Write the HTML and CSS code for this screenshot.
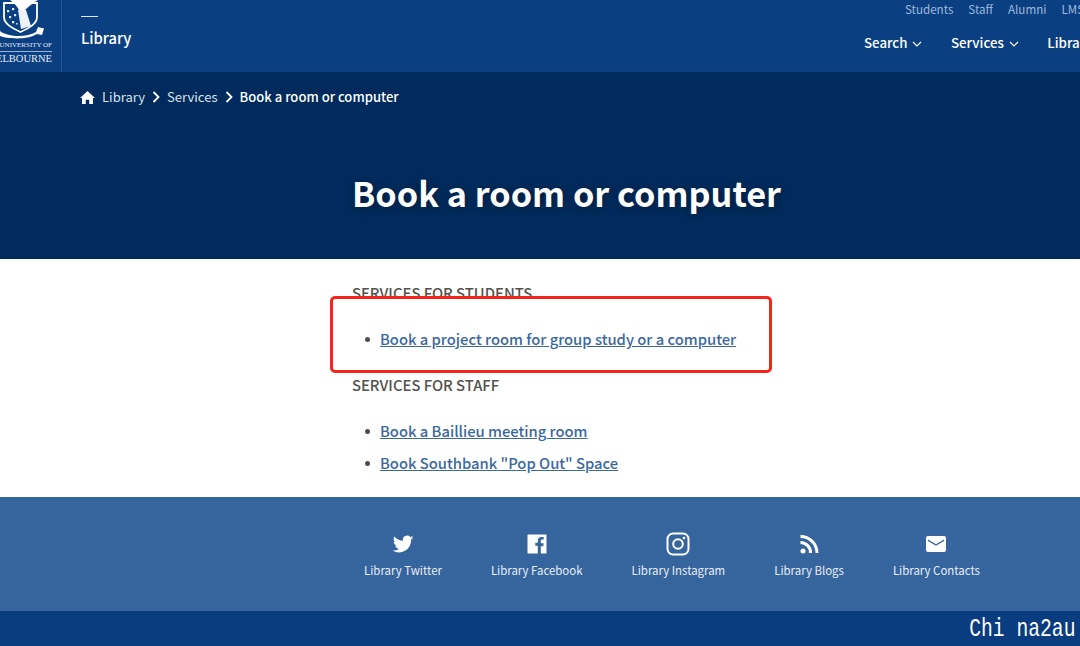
FILE: index.html
```html
<!DOCTYPE html>
<html lang="en">
<head>
<meta charset="utf-8">
<title>Book a room or computer</title>
<link rel="stylesheet" href="styles.css">
</head>
<body>
<header class="top">
  <div class="logo">
    <svg class="crest" width="46" height="40" viewBox="0 0 46 40">
      <path d="M4 3 H37 V17 C37 24 29 28 20.500 32 C12 28 4 24 4 17 Z" fill="none" stroke="#fff" stroke-width="1.800"/>
      <path d="M10 0 H38 C33 3 29 6 25 10 H19 C17 6 14 3 10 0 Z" fill="#fff"/>
      <path d="M18 10 H26 L31 26 L21 29 Z" fill="#eef2f8"/>
      <path d="M7 10h2.200v2.200H7zM12 8h2.200v2.200H12zM9 16h2.200v2.200H9zM14 14h2.200v2.200H14zM12 21h2.200v2.200H12zM16 23h1.500v1.500H16z" fill="#dfe7f2"/>
      <path d="M0 31 C8 37 26 38 36 32 L38 27 L44 28.500 L42 35 L37 34 C28 40 8 39 0 36 Z" fill="#fff"/>
    </svg>
    <div class="logo-line one">UNIVERSITY OF</div>
    <div class="logo-line two">ELBOURNE</div>
  </div>
  <div class="site">
    <span class="dash"></span>
    <span class="site-name">Library</span>
  </div>
  <nav class="nav">
    <ul class="nav-small">
      <li>Students</li><li>Staff</li><li>Alumni</li><li>LMS</li>
    </ul>
    <ul class="nav-main">
      <li>Search <svg class="chev" width="10" height="6" viewBox="0 0 10 6"><path d="M1 1l4 4 4-4" fill="none" stroke="#fff" stroke-width="1.200"/></svg></li>
      <li>Services <svg class="chev" width="10" height="6" viewBox="0 0 10 6"><path d="M1 1l4 4 4-4" fill="none" stroke="#fff" stroke-width="1.200"/></svg></li>
      <li>Library</li>
    </ul>
  </nav>
</header>
<section class="hero">
  <div class="crumbs">
    <svg width="15" height="13" viewBox="0 0 15 13"><path d="M7.500 0L15 7H13V13H9.200V8.800H5.800V13H2V7H0z" fill="#fff"/></svg>
    <span class="crumb">Library</span>
    <svg class="sep" width="8" height="12" viewBox="0 0 8 12"><path d="M1.500 1l5 5-5 5" fill="none" stroke="#fff" stroke-width="1.800"/></svg>
    <span class="crumb">Services</span>
    <svg class="sep" width="8" height="12" viewBox="0 0 8 12"><path d="M1.500 1l5 5-5 5" fill="none" stroke="#fff" stroke-width="1.800"/></svg>
    <strong class="crumb-now">Book a room or computer</strong>
  </div>
  <h1>Book a room or computer</h1>
</section>
<main class="content">
  <h2>SERVICES FOR STUDENTS</h2>
  <ul class="links">
    <li><a href="#">Book a project room for group study or a computer</a></li>
  </ul>
  <h2>SERVICES FOR STAFF</h2>
  <ul class="links">
    <li><a href="#">Book a Baillieu meeting room</a></li>
    <li><a href="#">Book Southbank "Pop Out" Space</a></li>
  </ul>
</main>
<section class="social">
  <a class="soc" href="#">
    <svg width="24" height="24" viewBox="0 0 24 24"><path fill="#fff" d="M22.500 5.600c-.8.3-1.600.6-2.400.7.9-.5 1.500-1.300 1.800-2.300-.8.5-1.700.8-2.700 1a4.200 4.200 0 0 0-7.200 3.800C8.500 8.600 5.400 7 3.300 4.400a4.200 4.200 0 0 0 1.300 5.600c-.7 0-1.300-.2-1.900-.5 0 2 1.400 3.800 3.400 4.200-.6.200-1.300.2-1.900.1.500 1.700 2.100 2.900 3.900 2.900A8.500 8.500 0 0 1 1.500 18.500 12 12 0 0 0 20 7.800c.9-.6 1.700-1.300 2.500-2.200z"/></svg>
    <span>Library Twitter</span>
  </a>
  <a class="soc" href="#">
    <svg width="24" height="24" viewBox="0 0 24 24"><path fill="#fff" d="M3 2.500h18a.5.5 0 0 1 .5.5v18a.5.5 0 0 1-.5.5h-5.200v-7.300h2.500l.4-2.900h-2.900V9c0-.8.200-1.400 1.400-1.400h1.500V5c-.3 0-1.200-.1-2.200-.1-2.200 0-3.700 1.300-3.700 3.800v2.100h-2.500v2.900h2.500v7.800H3a.5.5 0 0 1-.5-.5V3a.5.500 0 0 1 .5-.5z"/></svg>
    <span>Library Facebook</span>
  </a>
  <a class="soc" href="#">
    <svg width="24" height="24" viewBox="0 0 24 24"><rect x="1.500" y="1.500" width="21" height="21" rx="5.500" fill="none" stroke="#fff" stroke-width="2"/><circle cx="12" cy="12" r="4.800" fill="none" stroke="#fff" stroke-width="2"/><circle cx="18" cy="6" r="1.300" fill="#fff"/></svg>
    <span>Library Instagram</span>
  </a>
  <a class="soc" href="#">
    <svg width="24" height="24" viewBox="0 0 24 24"><circle cx="6" cy="19" r="2.500" fill="#fff"/><path d="M3.500 10.500a10 10 0 0 1 10 10.500M3.500 4.500a16.500 16.500 0 0 1 16.500 16.500" fill="none" stroke="#fff" stroke-width="3"/></svg>
    <span>Library Blogs</span>
  </a>
  <a class="soc" href="#">
    <svg width="24" height="24" viewBox="0 0 24 24"><path fill="#fff" d="M4 4h16a2 2 0 0 1 2 2v12a2 2 0 0 1-2 2H4a2 2 0 0 1-2-2V6a2 2 0 0 1 2-2zm0 3.500V9l8 4.800L20 9V7.500l-8 4.800z"/></svg>
    <span>Library Contacts</span>
  </a>
</section>
<footer class="bottom"><span class="mark">Chi na2au</span></footer>
<div class="callout"></div>
</body>
</html>
```
FILE: styles.css
```css
* { box-sizing: border-box; }
html, body { margin: 0; height: 646px; overflow: hidden; }
body {
  position: relative;
  width: 1080px;
  font-family: "Noto Sans CJK SC", "Noto Sans", sans-serif;
  background: #fff;
}
ul { margin: 0; padding: 0; }

.top {
  height: 72px;
  background: #0a4082;
  display: flex;
  color: #fff;
  position: relative;
}
.logo {
  width: 62px;
  height: 72px;
  border-right: 1px solid #245592;
  position: relative;
  overflow: hidden;
  flex: none;
}
.crest { position: absolute; left: 0; top: 0; }
.logo-line {
  position: absolute;
  right: 9px;
  font-family: "Liberation Serif", serif;
  color: #e4eaf3;
  white-space: nowrap;
}
.logo-line.one { top: 41px; font-size: 7px; padding-bottom: 2px; border-bottom: 1px solid #9fb4d2; width: 53px; text-align: right; }
.logo-line.two { top: 53px; font-size: 10.500px; }
.site { margin-left: 19px; display: flex; flex-direction: column; padding-top: 16px; }
.dash { width: 17px; height: 1px; background: #dfe7f2; }
.site-name { margin-top: 10px; font-size: 14.800px; line-height: 22px; font-weight: 500; }
.nav {
  position: absolute;
  right: 0;
  top: 0;
  width: 240px;
  height: 72px;
  overflow: hidden;
}
.nav-small {
  list-style: none;
  display: flex;
  gap: 15px;
  position: absolute;
  left: 65px;
  top: 0;
  font-size: 11.600px;
  line-height: 18px;
  color: #9fb8dc;
  white-space: nowrap;
}
.nav-main {
  list-style: none;
  display: flex;
  gap: 28.500px;
  position: absolute;
  left: 24px;
  top: 33px;
  font-size: 13.300px;
  line-height: 20px;
  font-weight: 500;
  white-space: nowrap;
}
.chev { margin-left: 2px; vertical-align: 1px; }

.hero {
  height: 187px;
  background: #012b5c;
  color: #fff;
  padding: 14px 0 0 80px;
}
.crumbs {
  display: flex;
  align-items: center;
  gap: 7px;
  font-size: 13.050px;
  line-height: 22px;
  color: #d9e2ef;
}
.crumb-now { color: #fff; font-weight: 500; }
h1 {
  margin: 61px 0 0 272px;
  font-size: 34.250px;
  line-height: 46px;
  font-weight: 700;
  text-shadow: 0 2px 8px rgba(0, 0, 0, .35);
  white-space: nowrap;
}

.content {
  height: 238px;
  padding: 24px 0 0 352px;
  color: #4a4a4a;
}
h2 {
  margin: 0;
  font-size: 14.800px;
  line-height: 20px;
  font-weight: 500;
  color: #54514e;
}
.links { padding-left: 13px; margin: 26px 0 26px; font-size: 14.750px; line-height: 20px; list-style: none; }
.links li { display: flex; align-items: center; gap: 10px; }
.links li::before { content: ""; width: 5px; height: 5px; border-radius: 50%; background: #4a4f55; }
.links li + li { margin-top: 12px; }
.links a { color: #3a689f; text-decoration: underline; font-weight: 500; }

.social {
  height: 114px;
  background: #36659e;
  display: flex;
  padding: 35px 0 0 364px;
  gap: 49px;
}
.soc {
  display: flex;
  flex-direction: column;
  align-items: center;
  gap: 5px;
  color: #e8eef6;
  text-decoration: none;
  font-size: 11.430px;
  line-height: 18px;
  white-space: nowrap;
}
.bottom {
  height: 35px;
  background: #0a3d80;
  display: flex;
  justify-content: flex-end;
  align-items: center;
  padding-right: 5px;
}
.mark {
  font-family: "Liberation Mono", monospace;
  font-size: 26px;
  line-height: 30px;
  color: #fff;
  white-space: pre;
  transform: scaleX(.756);
  transform-origin: right center;
}
.callout {
  position: absolute;
  left: 330px;
  top: 296px;
  width: 442px;
  height: 77px;
  border: 3px solid #f5251c;
  border-radius: 5px;
}
```
